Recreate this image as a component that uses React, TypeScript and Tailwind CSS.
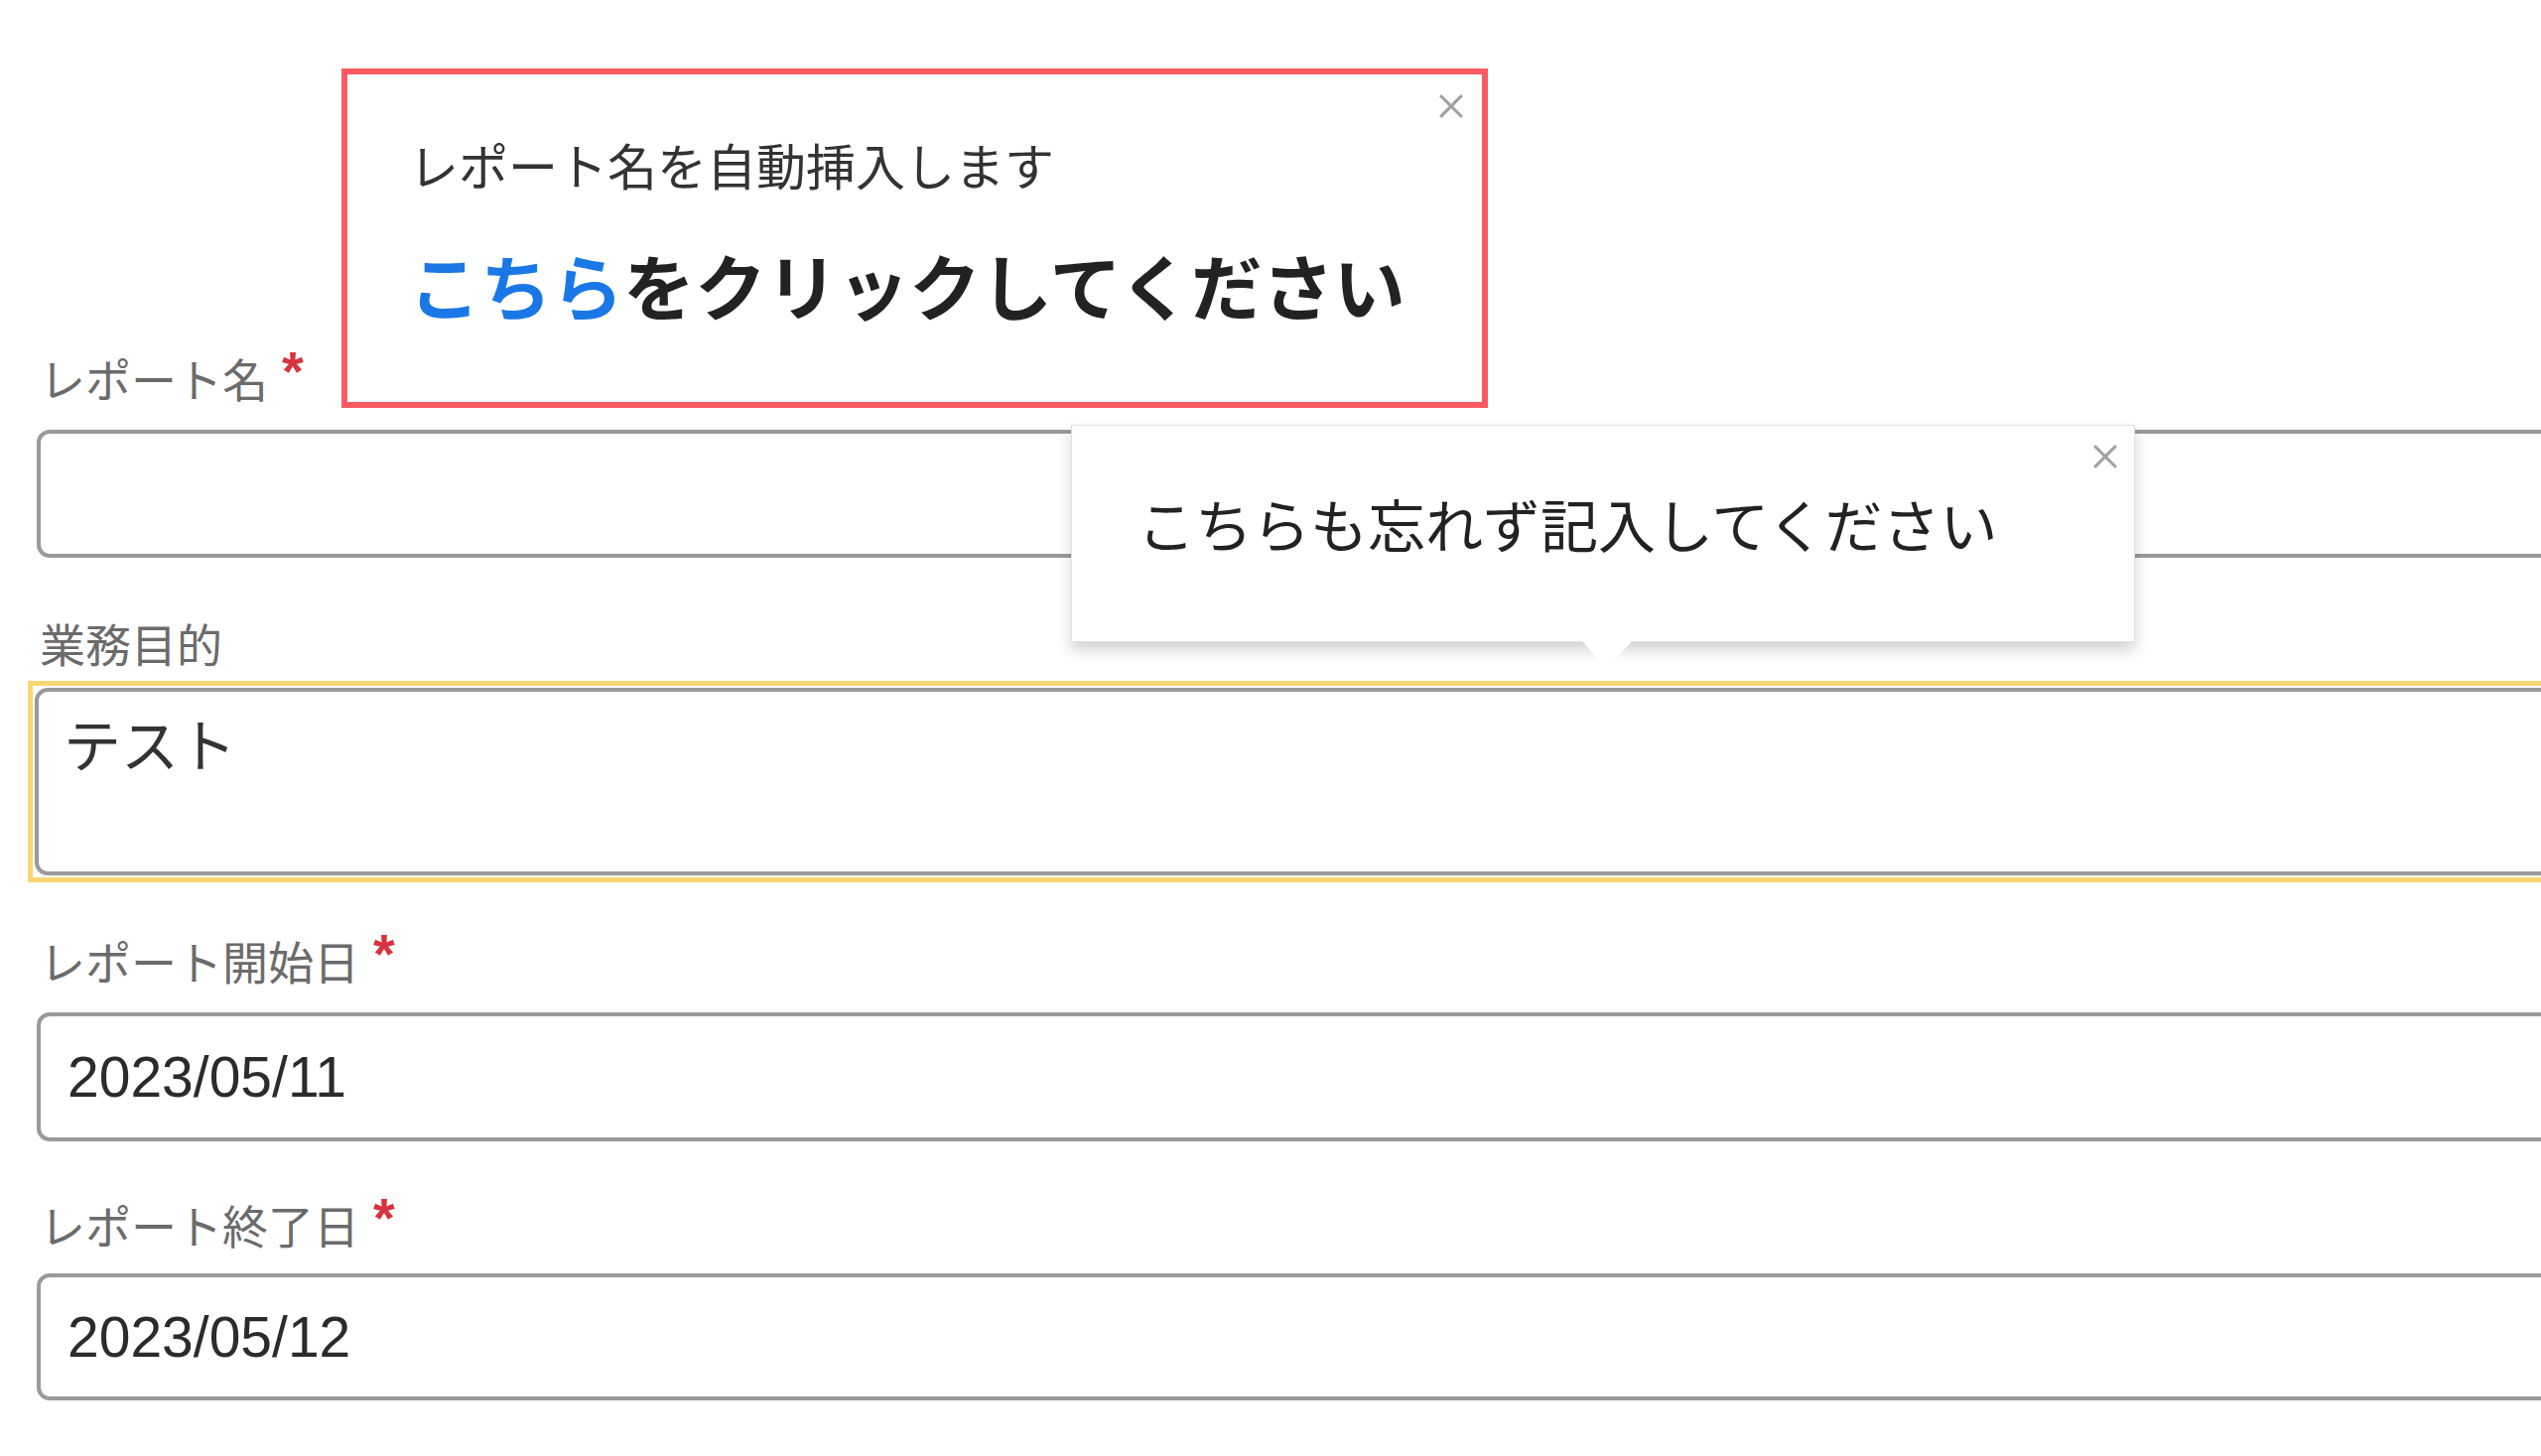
const jp = 'font-["Noto_Sans_CJK_JP",sans-serif]';

function CloseIcon({ size }: { size: number }) {
  return (
    <svg width={size} height={size} viewBox="0 0 24 24" fill="none">
      <path d="M3 3L21 21M21 3L3 21" stroke="#a0a0a0" strokeWidth="2.8" strokeLinecap="square" />
    </svg>
  );
}

function FieldLabel({ text, required, className }: { text: string; required?: boolean; className?: string }) {
  return (
    <div className={`flex items-start h-[56px] pl-[3px] ${className ?? ""}`}>
      <span className={`${jp} text-[46px] leading-[56px] text-[#6b6b6b]`}>{text}</span>
      {required && (
        <span className='font-["Liberation_Sans",sans-serif] font-bold text-[56px] leading-none text-[#d8333f] ml-[14px] -mt-[6px]'>*</span>
      )}
    </div>
  );
}

export default function App() {
  return (
    <div className="relative w-full h-[1467px] overflow-hidden bg-white">
      <div className="flex flex-col pl-[37px] pt-[352px]">
        <FieldLabel text="レポート名" required />
        <input
          readOnly
          defaultValue=""
          className="mt-[25px] w-[2700px] h-[129px] border-[4px] border-[#9a9a9a] rounded-[13px] bg-white outline-none"
        />

        <FieldLabel text="業務目的" className="mt-[57px]" />
        <div className="mt-[11px] -ml-[9px] w-[2700px] border-[5px] border-[#f8d672] p-[2px]">
          <textarea
            readOnly
            defaultValue="テスト"
            className={`${jp} block w-full h-[189px] border-[4px] border-[#9a9a9a] rounded-[13px] bg-white resize-none outline-none pl-[25px] pt-[16px] text-[58px] leading-[70px] text-[#333]`}
          />
        </div>

        <FieldLabel text="レポート開始日" required className="mt-[50px]" />
        <input
          readOnly
          defaultValue="2023/05/11"
          className='mt-[25px] w-[2700px] h-[130px] border-[4px] border-[#9a9a9a] rounded-[13px] bg-white outline-none pl-[27px] font-["Liberation_Sans",sans-serif] text-[57px] text-[#2b2b2b]'
        />

        <FieldLabel text="レポート終了日" required className="mt-[55px]" />
        <input
          readOnly
          defaultValue="2023/05/12"
          className='mt-[22px] w-[2700px] h-[128px] border-[4px] border-[#9a9a9a] rounded-[13px] bg-white outline-none pl-[27px] font-["Liberation_Sans",sans-serif] text-[57px] text-[#2b2b2b]'
        />
      </div>

      {/* red hint box */}
      <div className="absolute left-[344px] top-[69px] w-[1155px] h-[342px] border-[6px] border-[#fb5a62] bg-white pl-[62px] pt-[60px]">
        <button className="absolute right-[18px] top-[19px]">
          <CloseIcon size={26} />
        </button>
        <p className={`${jp} text-[50px] leading-[60px] text-[#333]`}>レポート名を自動挿入します</p>
        <p className={`${jp} mt-[48px] text-[72px] leading-[86px] font-bold text-[#222]`}>
          <span className="text-[#1a78e6]">こちら</span>をクリックしてください
        </p>
      </div>

      {/* tooltip */}
      <div className="absolute left-[1079px] top-[428px] w-[1072px] h-[219px] bg-white border border-[#e2e2e2] shadow-[0_8px_14px_rgba(0,0,0,0.18)] pl-[66px] pt-[63px]">
        <button className="absolute right-[16px] top-[18px]">
          <CloseIcon size={26} />
        </button>
        <p className={`${jp} text-[58px] leading-[70px] text-[#222]`}>こちらも忘れず記入してください</p>
        <svg className="absolute left-[514px] top-[217px]" width="50" height="28" viewBox="0 0 50 28">
          <path d="M0 0H50L25 28Z" fill="#fff" />
        </svg>
      </div>
    </div>
  );
}
